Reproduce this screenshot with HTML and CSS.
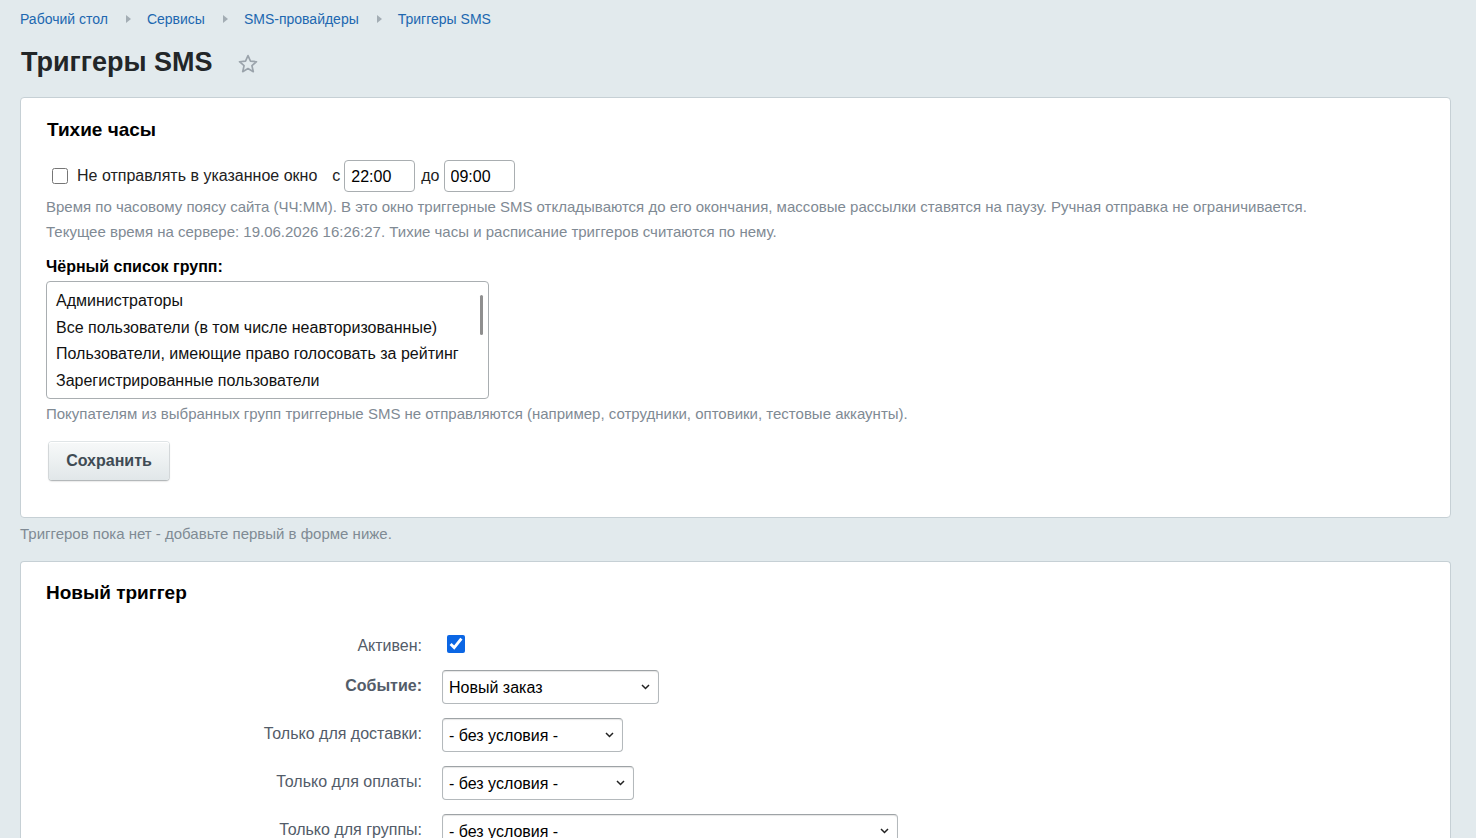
FILE: index.html
```html
<!DOCTYPE html>
<html lang="ru">
<head>
<meta charset="utf-8">
<title>Триггеры SMS</title>
<link rel="stylesheet" href="styles.css">
</head>
<body>
<div class="page">
  <nav class="crumbs">
    <a href="#">Рабочий стол</a><span class="sep"></span>
    <a href="#">Сервисы</a><span class="sep"></span>
    <a href="#">SMS-провайдеры</a><span class="sep"></span>
    <a href="#">Триггеры SMS</a>
  </nav>
  <div class="title-row">
    <h1 class="title">Триггеры SMS</h1>
    <svg class="star" width="22" height="22" viewBox="0 0 24 24"><path d="M12 2.8l2.7 6.1 6.6.6-5 4.4 1.5 6.5L12 17l-5.8 3.4 1.5-6.5-5-4.4 6.6-.6z" fill="none" stroke="#9aa3ab" stroke-width="1.8" stroke-linejoin="round"/></svg>
  </div>

  <section class="card card-quiet">
    <h2 class="card-title card-title-q">Тихие часы</h2>
    <div class="quiet-row">
      <label class="chk-label"><input type="checkbox" class="chk"> Не отправлять в указанное окно</label>
      <span class="word">с</span>
      <input type="text" class="time" value="22:00">
      <span class="word">до</span>
      <input type="text" class="time" value="09:00">
    </div>
    <p class="hint">Время по часовому поясу сайта (ЧЧ:ММ). В это окно триггерные SMS откладываются до его окончания, массовые рассылки ставятся на паузу. Ручная отправка не ограничивается.</p>
    <p class="hint">Текущее время на сервере: 19.06.2026 16:26:27. Тихие часы и расписание триггеров считаются по нему.</p>
    <div class="bl-label">Чёрный список групп:</div>
    <div class="listbox">
      <div class="opts">
        <div class="opt">Администраторы</div>
        <div class="opt">Все пользователи (в том числе неавторизованные)</div>
        <div class="opt">Пользователи, имеющие право голосовать за рейтинг</div>
        <div class="opt">Зарегистрированные пользователи</div>
      </div>
      <div class="scroll"><div class="thumb"></div></div>
    </div>
    <p class="hint hint-bl">Покупателям из выбранных групп триггерные SMS не отправляются (например, сотрудники, оптовики, тестовые аккаунты).</p>
    <button class="btn">Сохранить</button>
  </section>

  <p class="empty">Триггеров пока нет - добавьте первый в форме ниже.</p>

  <section class="card card-new">
    <h2 class="card-title">Новый триггер</h2>
    <div class="form">
      <div class="lbl lbl-first">Активен:</div>
      <div class="ctl ctl-first"><input type="checkbox" class="chk-on" checked></div>

      <div class="lbl lbl-b">Событие:</div>
      <div class="ctl"><span class="selwrap"><select class="sel sel-event"><option>Новый заказ</option></select><svg class="chev" width="9" height="6" viewBox="0 0 9 6"><path d="M1 1l3.5 3.5L8 1" fill="none" stroke="#222" stroke-width="1.5"/></svg></span></div>

      <div class="lbl">Только для доставки:</div>
      <div class="ctl"><span class="selwrap"><select class="sel sel-del"><option>- без условия -</option></select><svg class="chev" width="9" height="6" viewBox="0 0 9 6"><path d="M1 1l3.5 3.5L8 1" fill="none" stroke="#222" stroke-width="1.5"/></svg></span></div>

      <div class="lbl">Только для оплаты:</div>
      <div class="ctl"><span class="selwrap"><select class="sel sel-pay"><option>- без условия -</option></select><svg class="chev" width="9" height="6" viewBox="0 0 9 6"><path d="M1 1l3.5 3.5L8 1" fill="none" stroke="#222" stroke-width="1.5"/></svg></span></div>

      <div class="lbl">Только для группы:</div>
      <div class="ctl"><span class="selwrap"><select class="sel sel-grp"><option>- без условия -</option></select><svg class="chev" width="9" height="6" viewBox="0 0 9 6"><path d="M1 1l3.5 3.5L8 1" fill="none" stroke="#222" stroke-width="1.5"/></svg></span></div>
    </div>
  </section>
</div>
</body>
</html>
```
FILE: styles.css
```css
html, body {
  margin: 0;
  padding: 0;
  height: 100%;
  overflow: hidden;
}
body {
  background: #e2eaed;
  font-family: "Liberation Sans", Arial, sans-serif;
  color: #000;
}
.page {
  padding: 0 25px 0 20px;
}
.crumbs {
  display: flex;
  align-items: center;
  height: 38px;
  font-size: 14px;
}
.crumbs a {
  color: #2067b0;
  text-decoration: none;
}
.sep {
  width: 0;
  height: 0;
  border-left: 5px solid #a3adb4;
  border-top: 4px solid transparent;
  border-bottom: 4px solid transparent;
  margin: 0 16px 0 18px;
}
.title-row {
  display: flex;
  align-items: center;
  height: 48px;
  margin-bottom: 11px;
}
.title {
  margin: 0 0 0 1px;
  font-size: 27px;
  font-weight: bold;
  color: #222628;
}
.star {
  margin-left: 24px;
  margin-top: 4px;
}
.card {
  background: #fff;
  border: 1px solid #c6d0d5;
  border-radius: 4px;
  box-sizing: border-box;
}
.card-quiet {
  height: 421px;
  padding: 20px 25px 0 25px;
}
.card-title {
  margin: 0;
  font-size: 19px;
  font-weight: bold;
  line-height: 23px;
}
.card-title-q {
  margin-left: 1px;
}
.quiet-row {
  display: flex;
  align-items: center;
  margin-top: 19px;
  font-size: 16px;
  color: #222;
}
.chk-label {
  display: flex;
  align-items: center;
}
.chk {
  width: 16px;
  height: 16px;
  margin: 0 9px 0 6px;
}
.word {
  margin: 0 4px 0 15px;
}
.word + .time + .word {
  margin-left: 6px;
}
.time {
  width: 71px;
  height: 32px;
  box-sizing: border-box;
  border: 1px solid #a9aeb1;
  border-radius: 4px;
  font-family: "Liberation Sans", Arial, sans-serif;
  font-size: 16px;
  padding: 2px 6px 0;
  color: #000;
}
.hint {
  margin: 5px 0 0;
  font-size: 15px;
  line-height: 19px;
  color: #7f8a94;
}
.hint + .hint {
  margin-top: 6px;
}
.bl-label {
  margin-top: 16px;
  font-size: 16px;
  font-weight: bold;
  line-height: 20px;
}
.listbox {
  display: flex;
  width: 443px;
  height: 118px;
  box-sizing: border-box;
  border: 1px solid #a9aeb1;
  border-radius: 4px;
  margin-top: 4px;
  overflow: hidden;
}
.opts {
  flex: 1;
  padding: 6px 9px 0;
  font-size: 16px;
  color: #111;
}
.opt {
  height: 26.6px;
  line-height: 26px;
}
.scroll {
  width: 8px;
  padding-top: 13px;
}
.thumb {
  width: 3px;
  height: 40px;
  background: #8f8f8f;
  border-radius: 2px;
}
.hint-bl {
  margin-top: 5px;
}
.btn {
  display: block;
  margin: 19px 0 0 3px;
  width: 120px;
  height: 38px;
  border: none;
  border-radius: 3px;
  background: linear-gradient(#f7f9f9, #e1e7e9);
  box-shadow: 0 1px 2px rgba(0,0,0,0.28), inset 0 1px 0 #fff, 0 0 0 1px #e3e8ea;
  font-family: "Liberation Sans", Arial, sans-serif;
  font-size: 16px;
  font-weight: bold;
  color: #3f4b54;
}
.empty {
  margin: 7px 0 0;
  font-size: 15px;
  line-height: 18px;
  color: #7f8a94;
}
.card-new {
  margin-top: 18px;
  height: 400px;
  padding: 19px 25px 0;
  border-bottom: none;
}
.form {
  display: grid;
  grid-template-columns: 376px auto;
  column-gap: 20px;
  row-gap: 0;
  margin-top: 19px;
  align-items: center;
}
.lbl {
  text-align: right;
  font-size: 16px;
  color: #535c69;
  height: 48px;
  line-height: 44px;
}
.lbl-first {
  height: 41px;
  line-height: 46px;
}
.ctl {
  height: 48px;
  display: flex;
  align-items: center;
}
.ctl-first {
  height: 41px;
  padding-top: 1px;
  box-sizing: border-box;
}
.lbl-b {
  font-weight: bold;
}
.chk-on {
  width: 18px;
  height: 18px;
  margin: 0 0 0 5px;
  accent-color: #0b66e4;
}
.selwrap {
  position: relative;
  display: inline-block;
  margin-top: -2px;
}
.chev {
  position: absolute;
  right: 9px;
  top: 14px;
  pointer-events: none;
}
.sel {
  display: block;
  appearance: none;
  -webkit-appearance: none;
  height: 34px;
  box-sizing: border-box;
  border: 1px solid #b4b9bc;
  border-top-color: #9ea3a6;
  border-radius: 4px;
  background: #fff;
  font-family: "Liberation Sans", Arial, sans-serif;
  font-size: 16px;
  color: #000;
  padding: 1px 6px 0;
  box-shadow: inset 0 1px 1px rgba(0,0,0,0.1);
}
.sel-event { width: 217px; }
.sel-del { width: 181px; }
.sel-pay { width: 192px; }
.sel-grp { width: 456px; }
```
